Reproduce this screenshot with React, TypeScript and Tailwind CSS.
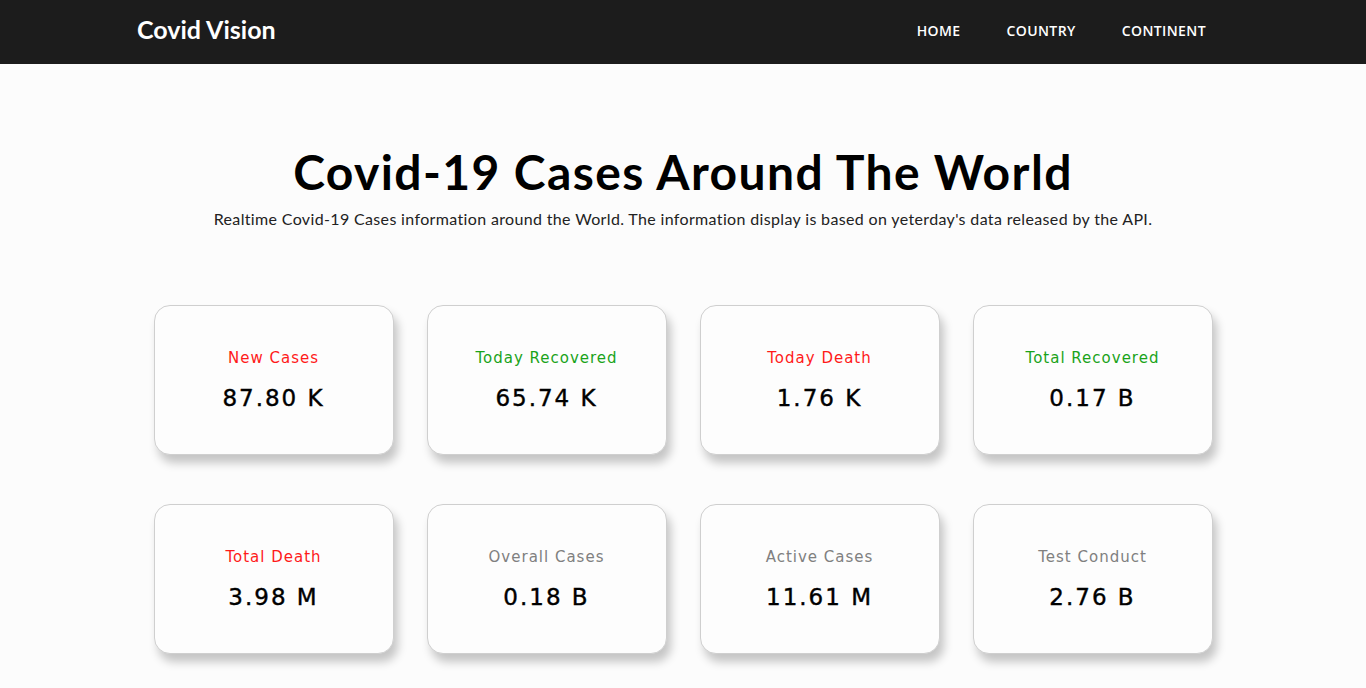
const stats = [
  { label: "New Cases", value: "87.80 K", color: "text-[#ff1a1a]" },
  { label: "Today Recovered", value: "65.74 K", color: "text-[#1aa31a]" },
  { label: "Today Death", value: "1.76 K", color: "text-[#ff1a1a]" },
  { label: "Total Recovered", value: "0.17 B", color: "text-[#1aa31a]" },
  { label: "Total Death", value: "3.98 M", color: "text-[#ff1a1a]" },
  { label: "Overall Cases", value: "0.18 B", color: "text-[#808080]" },
  { label: "Active Cases", value: "11.61 M", color: "text-[#808080]" },
  { label: "Test Conduct", value: "2.76 B", color: "text-[#808080]" },
];

const StatCard = ({ label, value, color }: { label: string; value: string; color: string }) => (
  <div className="h-[150px] w-[240px] rounded-2xl border border-[#cfcfcf] bg-[#fdfdfd] pt-[2px] shadow-[4px_8px_10px_rgba(0,0,0,0.22)] flex flex-col items-center justify-center font-['DejaVu_Sans',sans-serif]">
    <p className={`text-[15px] tracking-[1px] ${color}`}>{label}</p>
    <p className="mt-[12px] text-[23px] font-normal tracking-[2px] text-black [-webkit-text-stroke:0.4px_black]">{value}</p>
  </div>
);

export default function App() {
  return (
    <div className="min-h-screen bg-[#fcfcfc] font-['Lato',sans-serif]">
      {/* Navbar */}
      <header className="h-16 bg-[#1c1c1c]">
        <div className="mx-auto flex h-full w-[1092px] items-center justify-between pb-[4px]">
          <h1 className="text-[25px] font-bold text-white">Covid Vision</h1>
          <nav className="flex items-center gap-[46px] pr-[23px] font-['Open_Sans',sans-serif] text-[14px] font-semibold tracking-[0.4px] text-white">
            <a>HOME</a>
            <a>COUNTRY</a>
            <a>CONTINENT</a>
          </nav>
        </div>
      </header>

      {/* Hero */}
      <section className="pt-[78px] text-center">
        <h2 className="text-[48px] font-bold leading-[60px] tracking-[1.4px] text-black">
          Covid-19 Cases Around The World
        </h2>
        <p className="mt-[5px] text-[16px] tracking-[0.35px] text-[#222]">
          Realtime Covid-19 Cases information around the World. The information display is based on yeterday's data released by the API.
        </p>
      </section>

      {/* Cards */}
      <main className="mx-auto mt-[74px] grid w-[1059px] grid-cols-4 gap-x-[33px] gap-y-[49px] pb-10">
        {stats.map((s) => (
          <StatCard key={s.label} {...s} />
        ))}
      </main>
    </div>
  );
}
